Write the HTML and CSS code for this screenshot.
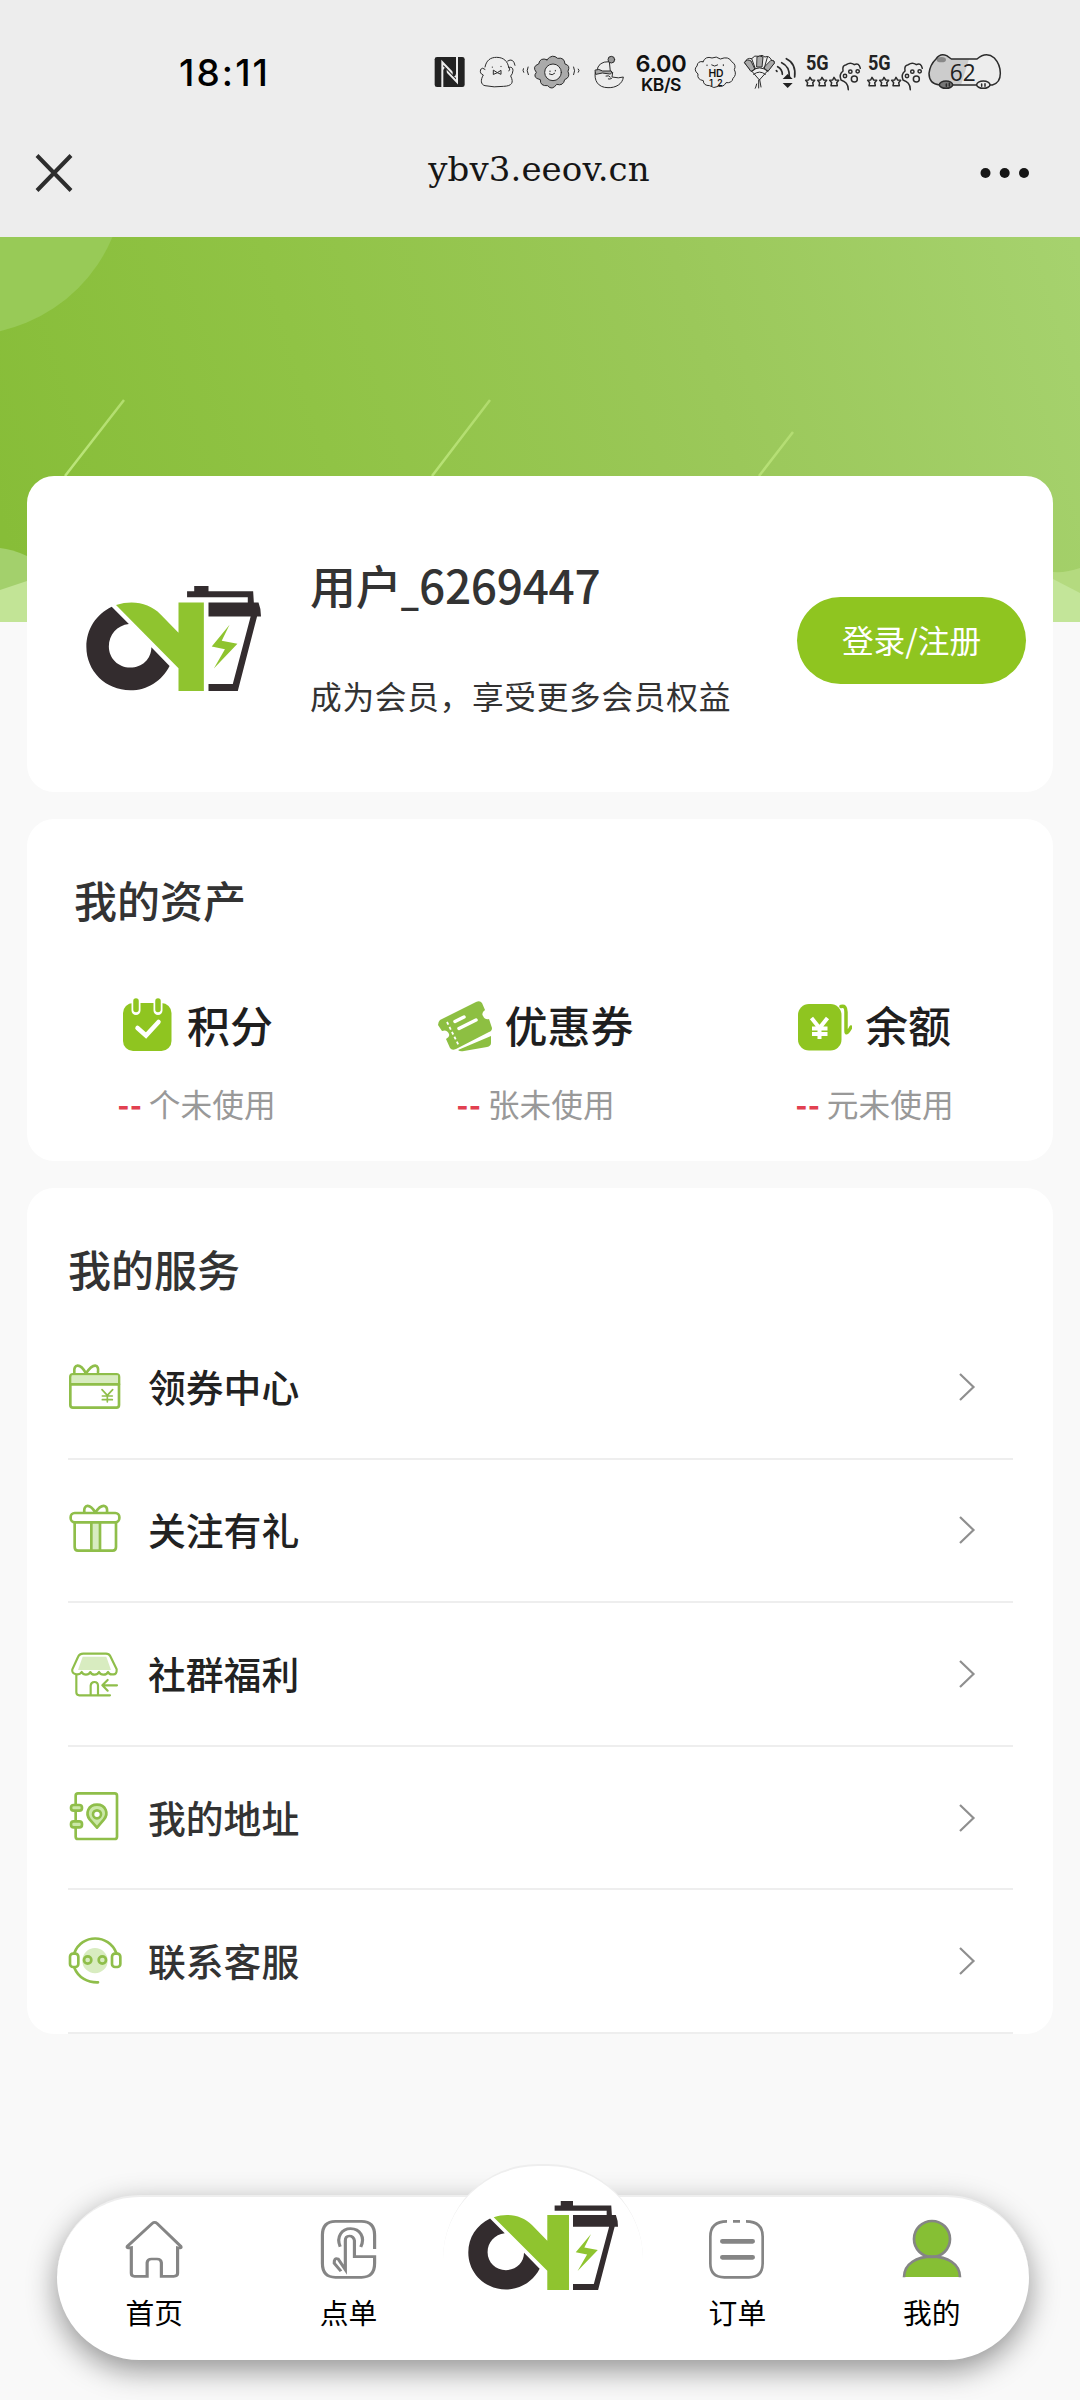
FILE: index.html
```html
<!DOCTYPE html>
<html lang="zh-CN">
<head>
<meta charset="utf-8">
<title>我的</title>
<link rel="stylesheet" href="styles.css">
</head>
<body>
<svg class="defs" aria-hidden="true">
  <symbol id="logo" viewBox="73 109 490 314" preserveAspectRatio="none">
    <path fill="#332c2e" d="M145 171L193 223C160 227 137 255 137 290C137 326 164 353 197 353C230 353 256 327 256 292L307 348C286 392 245 421 197 421C128 421 74 364 74 291C74 238 101 194 145 171Z"/>
    <path fill="#8fc42f" d="M157 166C205 150 250 160 282 194L332 249V158H403V423H332V355Z"/>
    <path fill="#332c2e" d="M356 125H376V109H416V125H541L543 158H556Q563 176 563 200H552L498 423H416V402H484L534 200H416V158H526V143H356Z"/>
    <path fill="#8fc42f" d="M475 225L425 290L462 298L431 356L497 282L453 273Z"/>
  </symbol>
</svg>

<header class="top">
  <div class="status">
    <time class="clock">18:11</time>
    <div class="status-icons">
      <svg width="38" height="38" viewBox="40 39 114 114"><rect x="45" y="51" width="90" height="90" rx="7" fill="#222"/><path d="M68 141V67L110 111M112 51V126L70 82" fill="none" stroke="#ededed" stroke-width="6"/><path d="M77 85V141M103 108V51" stroke="#222" stroke-width="8"/></svg>
      <svg width="46" height="38" viewBox="154 39 138 114"><g class="ink"><path d="M196 81C200 61 212 52 231 52C252 52 264 64 267 82Q280 80 280 91Q279 103 273 108C283 128 277 138 252 139Q223 143 196 137C183 134 182 120 191 105Q179 101 183 88Q188 81 196 88M264 63Q281 52 286 76M267 82Q274 87 268 93"/><path d="M222 91L233 98L244 91V103L233 98L222 103Z"/><path d="M218 81v1M244 79v1"/></g></svg>
      <svg width="66" height="38" viewBox="292 39 198 114"><g class="ink"><path fill="#aaa" d="M382 59Q398 40 414 55Q434 51 436 72Q453 76 445 94Q453 112 435 119Q431 139 411 133Q397 153 384 137Q361 139 362 119Q337 113 350 97Q336 79 357 72Q361 51 382 59Z"/><circle cx="400" cy="97" r="25" fill="#ededed"/><path d="M391 93v2M407 91v2M389 102Q398 108 405 100M311 86Q308 91 312 97M325 81Q319 92 326 104M462 81Q468 92 462 104M476 87Q481 92 476 97"/></g></svg>
      <svg width="50" height="38" viewBox="490 39 150 114"><g class="ink"><path d="M527 96C522 121 535 143 565 143C588 144 609 132 611 111Q598 116 577 111L579 97M532 93Q534 64 569 65L572 94"/><circle cx="575" cy="59" r="10" fill="#999"/><path fill="#aaa" d="M527 90Q537 85 549 93L575 93Q579 101 570 102L548 99L529 103Z"/><path d="M559 108Q568 105 572 111M566 117Q571 119 576 115"/></g></svg>
      <div class="rate"><span>6.00</span><small>KB/S</small></div>
      <svg width="54" height="38" viewBox="808 39 162 114"><g class="ink"><path d="M850 65Q858 47 877 54Q890 47 902 57Q927 47 936 65Q951 74 944 89Q952 104 940 115Q937 130 919 128Q912 142 896 139Q882 147 870 137Q851 137 851 122Q831 118 835 102Q820 89 832 78Q834 62 850 65Z"/><path d="M862 75v2M911 74v3M876 75Q885 82 894 75"/></g><g class="strong"><text x="889" y="111" font-size="31">HD</text><text x="889" y="137" font-size="26" textLength="40">1 2</text></g></svg>
      <svg width="60" height="38" viewBox="970 39 180 114"><g class="ink"><path d="M975 67Q982 52 996 56Q1004 44 1018 49Q1027 42 1036 51Q1048 45 1056 61Q1067 61 1063 71L1020 119Z" fill="#eee"/><path fill="#aaa" d="M975 67Q982 55 994 63L1006 88L995 94ZM1013 50Q1020 45 1030 51L1027 81H1012ZM1055 61Q1067 62 1063 71L1045 94L1033 84Z"/><path d="M996 93Q1020 73 1045 94M1002 103Q1020 89 1037 103M996 56L1007 86M1043 52L1034 84M1017 121V144M1020 119L1024 141M1011 132Q1008 144 1007 145"/><path stroke-width="5" d="M1070 92l2 2M1074 80Q1088 88 1088 103M1086 68Q1110 79 1109 110M1100 56Q1130 70 1125 111"/></g><path fill="#222" d="M1089 117L1104 102L1119 117ZM1089 129L1104 144L1119 129Z"/></svg>
      <svg width="62" height="38" viewBox="1150 39 186 114"><g id="net"><text class="net" x="1193" y="90" font-size="62" textLength="68" lengthAdjust="spacingAndGlyphs">5G</text><g class="ink bold"><path d="M1171 112L1176 120L1185 121L1179 128L1181 137H1162L1164 128L1158 121L1167 120ZM1207 112L1212 120L1221 121L1215 128L1217 137H1198L1200 128L1194 121L1203 120ZM1243 112L1248 120L1257 121L1251 128L1253 137H1234L1236 128L1230 121L1239 120ZM1286 149C1285 130 1278 126 1264 120Q1257 103 1270 93Q1267 75 1280 74Q1292 65 1304 74Q1318 67 1322 85"/><circle cx="1292" cy="95" r="5"/><circle cx="1314" cy="94" r="5"/><circle cx="1276" cy="108" r="5"/><circle cx="1304" cy="117" r="9"/></g></g></svg>
      <svg width="62" height="38" viewBox="1150 39 186 114"><use href="#net"/></svg>
      <svg width="80" height="38" viewBox="1522 39 240 114"><path d="M1549 57Q1561 39 1581 47L1595 57H1672Q1700 33 1724 54C1738 69 1742 85 1742 100Q1742 129 1718 135H1560Q1528 133 1528 100Q1531 74 1549 57Z" fill="#ededed"/><path fill="#ccc" d="M1549 57Q1561 39 1581 47L1595 57H1648L1624 135H1560Q1528 133 1528 100Q1531 74 1549 57Z"/><ellipse cx="1565" cy="59" rx="14" ry="8" fill="#888"/><g class="ink bold"><path d="M1549 57Q1561 39 1581 47L1595 57H1672Q1700 33 1724 54C1738 69 1742 85 1742 100Q1742 129 1718 135H1560Q1528 133 1528 100Q1531 74 1549 57Z"/><ellipse cx="1579" cy="134" rx="20" ry="11" fill="#777"/><ellipse cx="1691" cy="134" rx="20" ry="11" fill="#ededed"/><path d="M1580 132v7M1589 130v8M1686 132v7M1696 131v8"/></g><text class="net bat" x="1629" y="122" font-size="70" textLength="78" lengthAdjust="spacingAndGlyphs">62</text></svg>
    </div>
  </div>
  <div class="nav">
    <svg class="close" width="38" height="38" viewBox="0 0 38 38"><path d="M2 1.5L36 36.5M36 1.5L2 36.5" stroke="#2d2d2d" stroke-width="4"/></svg>
    <h1 class="site">ybv3.eeov.cn</h1>
    <svg class="more" width="50" height="12" viewBox="0 0 50 12" fill="#161616"><circle cx="5.500" cy="6" r="5"/><circle cx="24.700" cy="6" r="5"/><circle cx="44" cy="6" r="5"/></svg>
  </div>
</header>

<svg class="hero" width="1080" height="385" viewBox="0 237 1080 385">
  <defs>
    <linearGradient id="green" gradientUnits="userSpaceOnUse" x1="0" y1="520" x2="1060" y2="190"><stop offset="0" stop-color="#87bd38"/><stop offset=".3" stop-color="#90c345"/><stop offset=".65" stop-color="#9bc85a"/><stop offset="1" stop-color="#a6d26e"/></linearGradient>
    <linearGradient id="ray" x1="1" y1="0" x2="0" y2="1"><stop offset="0" stop-color="#c4ea82" stop-opacity=".5"/><stop offset="1" stop-color="#bce67c"/></linearGradient>
  </defs>
  <rect y="237" width="1080" height="385" fill="url(#green)"/>
  <circle cx="-35" cy="175" r="160" fill="#98ca57"/>
  <path d="M124 400L65 476M490 400L432 476M793 432L759 476" stroke="url(#ray)" stroke-width="2.500"/>
  <path d="M0 548Q12 549 27 556V622H0Z" fill="#a3d06c"/><path d="M0 590L27 581V622H0Z" fill="#c2e496"/>
  <path d="M1053 572Q1066 573 1080 568V622H1053Z" fill="#b4da7f"/><path d="M1053 579L1080 593V622H1053Z" fill="#c3e599"/>
</svg>

<main class="content">
  <section class="card profile">
    <svg class="avatar" width="175" height="105"><use href="#logo" width="175" height="105"/></svg>
    <div class="who">
      <h2 class="name">用户<span class="line">_</span>6269447</h2>
      <p class="hint">成为会员，享受更多会员权益</p>
    </div>
    <button class="login">登录/注册</button>
  </section>

  <section class="card assets">
    <h3 class="title">我的资产</h3>
    <div class="grid">
      <div class="asset">
        <div class="head">
          <svg width="54" height="55" viewBox="0 0 54 55"><rect x="3" y="6" width="48.500" height="48" rx="10" fill="#8fc520"/><path d="M16 3V13.500M38 3V13.500" stroke="#fff" stroke-width="9" stroke-linecap="round"/><path d="M16 4V12.500M38 4V12.500" stroke="#8fc520" stroke-width="5.500" stroke-linecap="round"/><path d="M17.500 31L26 38.500L38.500 25" fill="none" stroke="#fff" stroke-width="4.500" stroke-linecap="round"/></svg>
          <span>积分</span>
        </div>
        <p class="sub"><b>--</b>个未使用</p>
      </div>
      <div class="asset">
        <div class="head">
          <svg width="54" height="55" viewBox="0 0 54 55"><path fill="#8dbf42" d="M2 23L38 5Q42 3 44 6L47 13Q43 16 45 19Q47 23 51 22L54 31Q54 34 51 35L18 52Q14 54 12 51L8 42Q12 40 11 37Q9 32 4 34L0 28Q0 25 2 23Z"/><path fill="#8dbf42" d="M20 53L53 39V46Q53 49 49 50L26 54Q22 55 20 53Z"/><path d="M9 25L21 49" stroke="#fff" stroke-width="1.800" stroke-dasharray="3 2.500"/><path d="M17 24.500L26 20M21 31.500L38 23" stroke="#fff" stroke-width="3.500" stroke-linecap="round"/></svg>
          <span>优惠券</span>
        </div>
        <p class="sub"><b>--</b>张未使用</p>
      </div>
      <div class="asset">
        <div class="head">
          <svg width="54" height="55" viewBox="0 0 54 55"><rect y="7" width="43.500" height="46.500" rx="11" fill="#8fc520"/><path d="M13.500 21L21.500 31L29.500 21M21.500 29V42M14 31.500H29.500M14 37H29.500" fill="none" stroke="#fff" stroke-width="4"/><path d="M43 9.500Q48 8 48 15V34Q48 39 53 30" fill="none" stroke="#8fc520" stroke-width="3.500" stroke-linecap="round"/></svg>
          <span>余额</span>
        </div>
        <p class="sub"><b>--</b>元未使用</p>
      </div>
    </div>
  </section>

  <section class="card services">
    <h3 class="title">我的服务</h3>
    <ul class="list">
      <li class="row">
        <svg class="ic" viewBox="144 480 162 162"><rect x="151" y="523" width="146" height="100" rx="8"/><path class="tint" d="M155 526H294V551H155Z"/><path d="M151 553H297M198 520C180 487 160 492 163 517M198 520C220 487 238 492 234 517" /><path d="M246 569L262 586L278 569M262 586V606M247 588H277M247 599H277" stroke-width="5"/></svg>
        <span class="label">领券中心</span><svg class="chev" viewBox="0 0 18 30"><path d="M2 2L15.500 15L2 28"/></svg>
      </li>
      <li class="row">
        <svg class="ic" viewBox="144 912 162 162"><path class="tint" d="M214 970H240V1052H214Z"/><rect x="152" y="942" width="146" height="28" rx="12"/><path d="M164 970V1044Q164 1055 174 1055H278Q288 1055 288 1044V970M214 971V1054M240 971V1054M226 941C210 912 190 916 193 939M226 941C244 912 264 916 261 939"/></svg>
        <span class="label">关注有礼</span><svg class="chev" viewBox="0 0 18 30"><path d="M2 2L15.500 15L2 28"/></svg>
      </li>
      <li class="row">
        <svg class="ic thin" viewBox="144 82 162 162"><path class="tint" d="M188 111H259L273 151H174Z"/><path d="M190 102H258Q267 102 271 110L290 149Q291 165 279 164Q268 166 264 157Q261 165 250 165Q241 165 237 157Q233 165 224 165Q214 165 211 157Q207 165 198 165Q189 165 185 157Q180 165 169 164Q154 161 157 149L174 112Q178 102 190 102ZM169 165V218Q169 227 178 227H270M212 227V198Q213 187 223 187Q234 187 234 198V227M248 197H291M263 181L247 197L263 213"/></svg>
        <span class="label">社群福利</span><svg class="chev" viewBox="0 0 18 30"><path d="M2 2L15.500 15L2 28"/></svg>
      </li>
      <li class="row soft">
        <svg class="ic" viewBox="144 513 162 162"><rect x="167" y="520" width="124" height="137" rx="7"/><rect class="fill" x="153" y="555" width="33" height="17" rx="8"/><rect class="fill" x="153" y="604" width="33" height="18" rx="8"/><path class="fill" d="M231 623L209 598C195 580 205 554 231 554C257 554 267 580 252 598Z"/><circle cx="231" cy="583" r="12" class="white"/></svg>
        <span class="label">我的地址</span><svg class="chev" viewBox="0 0 18 30"><path d="M2 2L15.500 15L2 28"/></svg>
      </li>
      <li class="row soft">
        <svg class="ic" viewBox="144 943 162 162"><circle class="tint" cx="225" cy="1023" r="38"/><circle cx="203" cy="1021" r="11"/><circle cx="247" cy="1021" r="11"/><rect x="150" y="1002" width="25" height="40" rx="9"/><rect x="276" y="1002" width="25" height="40" rx="9"/><path d="M163 1000C184 942 267 942 289 1000M163 1044C175 1074 203 1089 234 1088"/></svg>
        <span class="label">联系客服</span><svg class="chev" viewBox="0 0 18 30"><path d="M2 2L15.500 15L2 28"/></svg>
      </li>
    </ul>
  </section>
</main>

<nav class="tabs">
  <a class="tab"><svg viewBox="236.500 237 151.700 180" preserveAspectRatio="none"><path d="M255 323V400Q255 409 263 409H295V368Q296 357 306 357H320Q330 357 331 368V409H362Q372 409 372 400V323Q383 326 380 319L320 250Q314 244 308 250L245 319Q242 326 255 323Z"/></svg><span>首页</span></a>
  <a class="tab"><svg viewBox="729.400 237 151.700 180" preserveAspectRatio="none"><path d="M870 327V286Q870 244 837 244H771Q738 244 738 286V370Q738 412 771 412H837Q870 412 870 370V350H819V302Q817 288 806 288Q796 288 796 302V389L778 357Q767 352 768 370L785 394M783 320C772 290 788 266 809 266C833 266 847 292 835 321"/></svg><span>点单</span></a>
  <a class="tab mid"><span class="disc"><svg width="150" height="89"><use href="#logo" width="150" height="89"/></svg></span></a>
  <a class="tab"><svg viewBox="201 237 180 180"><path d="M261 244Q211 244 211 290V370Q211 412 253 412H327Q368 412 368 370V290Q368 244 318 244M279 244H300"/><path d="M247 304H338M247 352H338" stroke-width="14" stroke-linecap="round"/></svg><span>订单</span></a>
  <a class="tab"><svg viewBox="785 237 180 180"><path fill="#86bf34" stroke="none" d="M791 411C791 370 830 350 875 350C920 350 959 370 959 411Z"/><circle cx="875" cy="297" r="54" fill="#86bf34"/><path d="M791 412C791 370 830 350 875 350C920 350 959 370 959 412"/></svg><span>我的</span></a>
</nav>
</body>
</html>
```
FILE: styles.css
```css
* { box-sizing: border-box; margin: 0; padding: 0; }
body {
  width: 1080px;
  height: 2400px;
  overflow: hidden;
  background: #f9f9f9;
  color: #333;
  font-family: "Noto Sans CJK SC", sans-serif;
}
svg { display: block; flex: none; }
.defs { position: absolute; width: 0; height: 0; }

/* system bar and page title */
.top { height: 237px; background: #ededed; }
.status { height: 145px; padding-left: 179px; display: flex; }
.clock {
  width: 254px;
  padding-top: 50px;
  font: 500 37px/46px Inter, sans-serif;
  letter-spacing: 2.100px;
  color: #000;
}
.status-icons { display: flex; padding-top: 53px; }
.status-icons svg { overflow: visible; }
.rate {
  width: 56px;
  height: 38px;
  display: flex;
  flex-direction: column;
  align-items: center;
  font-family: Inter, sans-serif;
  font-weight: 600;
  color: #111;
}
.rate span { margin-top: -3px; font-size: 23.500px; line-height: 28px; letter-spacing: -.3px; }
.rate small { margin-top: -4px; font-size: 17.500px; line-height: 21px; letter-spacing: -.5px; }
.ink { fill: none; stroke: #2b2b2b; stroke-width: 3; stroke-linecap: round; stroke-linejoin: round; }
.bold { stroke-width: 4.500; }
.strong { font-family: Inter, sans-serif; font-weight: 600; fill: #111; text-anchor: middle; }
.net { font-family: Roboto, sans-serif; font-weight: 700; fill: #222; text-anchor: middle; }
.bat { font-weight: 500; font-family: "Open Sans", sans-serif; }
.nav { height: 56px; padding: 0 50px 0 35px; display: flex; align-items: center; justify-content: space-between; }
.site { font: 400 34px/56px "DejaVu Serif", serif; color: #161616; letter-spacing: .1px; transform: translateY(-4px); margin-left: 25px; }

.hero { margin-bottom: -146px; }

.content { position: relative; padding: 0 27px; display: flex; flex-direction: column; gap: 27px; }
.card { background: #fff; border-radius: 27px; }

.profile { height: 316px; display: flex; align-items: flex-start; }
.avatar { margin: 110px 0 0 59px; }
.who { margin: 76px 0 0 49px; flex: 1; }
.name { font-size: 46px; line-height: 64px; font-weight: 500; letter-spacing: -.3px; white-space: nowrap; }
.line { display: inline-block; margin: 0 -4px 0 -4px; transform: scaleX(.7); }
.hint { margin-top: 47px; font-size: 31.700px; line-height: 64px; letter-spacing: .7px; color: #333; white-space: nowrap; }
.login {
  width: 229px; height: 87px; margin: 121px 27px 0 0;
  border: 0; border-radius: 44px; background: #8fc520; color: #fff;
  font: 400 31.700px/82px "Noto Sans CJK SC", sans-serif;
  padding-bottom: 4px;
}

.title { font-size: 43px; line-height: 60px; font-weight: 500; }
.assets { height: 342px; padding: 50px 9px 0 0; }
.assets .title { padding-left: 47px; }
.grid { display: grid; grid-template-columns: repeat(3, 1fr); margin-top: 68px; }
.asset { display: flex; flex-direction: column; align-items: center; }
.head { display: flex; gap: 13px; height: 56px; color: #1f1f1f; font-size: 43px; line-height: 54px; font-weight: 500; }
.sub { margin-top: 26px; display: flex; gap: 6px; font-size: 31.700px; line-height: 48px; color: #999; }
.sub b { color: #e24050; font-weight: 700; letter-spacing: 1px; }

.services { height: 846px; padding: 50px 40px 0 41px; }
.list { list-style: none; margin-top: 18px; }
.row { height: 143.600px; display: flex; align-items: center; border-bottom: 2px solid #eee; color: #222; }
.soft { color: #333; }
.label { margin-left: 26px; flex: 1; font-size: 37.800px; line-height: 60px; font-weight: 500; transform: translateY(-1.500px); }
.ic { width: 54px; height: 54px; fill: none; stroke: #8fbe4a; stroke-width: 8; stroke-linecap: round; stroke-linejoin: round; }
.thin { stroke-width: 6.500; }
.tint { fill: #d8ecc0; stroke: none; }
.fill { fill: #cbe8a8; }
.white { fill: #fff; }
.chev { width: 18px; height: 30px; margin-right: 37px; fill: none; stroke: #8f8f8f; stroke-width: 2.200; }

/* floating tab bar */
.tabs {
  position: relative;
  width: 972px; height: 165px; margin: 161px 0 0 57px;
  display: grid; grid-template-columns: repeat(5, 1fr);
  border-top: 2px solid #eee; border-radius: 83px; background: #fff;
  box-shadow: 0 10px 30px rgba(0, 0, 0, .42);
}
.tab { display: flex; flex-direction: column; align-items: center; padding-top: 22px; color: #000; font-size: 28.800px; line-height: 40px; }
.tab > svg { width: 60px; height: 60px; fill: none; stroke: #858585; stroke-width: 8; }
.tab > span:not(.disc) { margin-top: 13px; }
.mid { position: relative; }
.disc {
  position: absolute; left: -3px; top: -33px; width: 200px; height: 190px;
  border-top: 2px solid #eee; border-radius: 100px; background: #fff;
  display: flex; justify-content: center; padding-top: 35px;
}
```
